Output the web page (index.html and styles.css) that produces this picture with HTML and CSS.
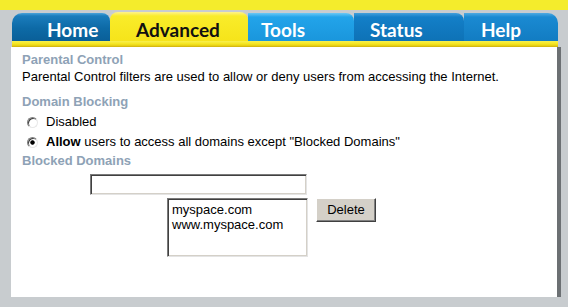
FILE: index.html
```html
<!DOCTYPE html>
<html>
<head>
<meta charset="utf-8">
<link rel="stylesheet" href="styles.css">
</head>
<body>
<div class="topbar"></div>
<div class="frame">
  <nav class="tabs">
    <a class="tab tab-home">Home</a>
    <a class="tab tab-adv">Advanced</a>
    <a class="tab tab-tools">Tools</a>
    <a class="tab tab-status">Status</a>
    <a class="tab tab-help">Help</a>
  </nav>
  <div class="tabline"></div>
  <main class="content">
    <h2 class="head">Parental Control</h2>
    <p class="text">Parental Control filters are used to allow or deny users from accessing the Internet.</p>
    <h2 class="head head-gap">Domain Blocking</h2>
    <div class="opts">
      <label class="opt"><span class="radio"></span>Disabled</label>
      <label class="opt"><span class="radio on"></span><b>Allow</b>&nbsp;users to access all domains except "Blocked Domains"</label>
    </div>
    <h2 class="head">Blocked Domains</h2>
    <div class="entry"><span class="field"></span></div>
    <div class="listrow">
      <div class="list">myspace.com<br>www.myspace.com</div>
      <span class="btn">Delete</span>
    </div>
  </main>
</div>
</body>
</html>
```

FILE: styles.css
```css
* { box-sizing: border-box; margin: 0; padding: 0; }
html, body { width: 568px; height: 307px; overflow: hidden; }
body {
  background: #c8cccf;
  font-family: "Liberation Sans", Arial, sans-serif;
  color: #000;
}
.topbar { height: 10px; background: #f4ec2c; }
.frame { margin-left: 11px; width: 552px; display: flex; flex-direction: column; }
.tabs { display: flex; align-items: flex-end; height: 31px; padding-left: 1px; }
.tab {
  display: block;
  height: 28px;
  padding-top: 6px;
  font: bold 19px/22px Lato, "DejaVu Sans", sans-serif;
  color: #fff;
  white-space: nowrap;
}
.tab-home {
  width: 98px; padding-left: 35px;
  border-radius: 10px 8px 0 0;
  background: linear-gradient(#4aa3da 0, #1a7cbc 3px, #0d6aa6 55%, #0a5f98 100%);
}
.tab-adv {
  width: 138px; height: 29px; padding-top: 7px; padding-left: 26px;
  border-radius: 8px 8px 0 0;
  color: #111;
  background: linear-gradient(#fff38a 0, #f9ec2a 4px, #f6e41a 100%);
}
.tab-tools {
  width: 106px; padding-left: 13px;
  border-radius: 0 8px 0 0;
  background: linear-gradient(#6cc8f4 0, #22a4ea 4px, #1a96dc 100%);
}
.tab-status {
  width: 110px; padding-left: 16px;
  border-radius: 0 8px 0 0;
  background: linear-gradient(#44a0dc 0, #137fc8 4px, #0e72b6 100%);
}
.tab-help {
  width: 94px; padding-left: 17px;
  border-radius: 0 10px 0 0;
  background: linear-gradient(#50aae2 0, #1a8ad2 4px, #127cc2 100%);
}
.tabline {
  height: 6px;
  margin-left: 1px;
  width: 546px;
  background: linear-gradient(#f8f050 0, #f4e51e 50%, #e2c812 85%, #c9a80c 100%);
}
.content {
  width: 550px;
  height: 250px;
  background: #fff;
  border-right: 4px solid #6c7073;
  padding: 4px 0 0 11px;
}
.head {
  font-size: 13px;
  font-weight: bold;
  line-height: 17px;
  color: #8ea2b6;
}
.head-gap { margin-top: 8px; }
.text { font-size: 13px; line-height: 17px; }
.opts { margin-top: 2px; }
.opt {
  display: flex;
  align-items: center;
  height: 20px;
  font-size: 13px;
  line-height: 20px;
  padding-left: 5px;
}
.opt b { font-weight: bold; }
.radio {
  width: 11px; height: 11px;
  border-radius: 50%;
  margin-right: 8px;
  border: 1px solid;
  border-color: #808080 #e8e8e8 #e8e8e8 #808080;
  box-shadow: inset 1px 1px 0 #404040;
  background: #fff;
}
.radio.on { background: radial-gradient(circle, #000 0 1.8px, #fff 2.6px); }
.entry { margin-top: 5px; padding-left: 68px; }
.field {
  display: block;
  width: 217px; height: 21px;
  background: #fff;
  border: 1px solid;
  border-color: #7a7a7a #e4e4e4 #e4e4e4 #7a7a7a;
  box-shadow: inset 1px 1px 0 #404040, inset -1px -1px 0 #d4d0c8;
}
.listrow { display: flex; align-items: flex-start; margin-top: 3px; padding-left: 145px; }
.list {
  width: 141px; height: 59px;
  border: 1px solid;
  border-color: #7a7a7a #e4e4e4 #e4e4e4 #7a7a7a;
  box-shadow: inset 1px 1px 0 #404040, inset -1px -1px 0 #d4d0c8;
  padding: 3px 0 0 4px;
  font-size: 13px;
  line-height: 15px;
}
.btn {
  margin-left: 8px;
  width: 60px; height: 24px;
  background: #d4d0c8;
  border: 1px solid;
  border-color: #fff #404040 #404040 #fff;
  box-shadow: inset -1px -1px 0 #808080;
  font-size: 13px;
  line-height: 21px;
  text-align: center;
}
```
